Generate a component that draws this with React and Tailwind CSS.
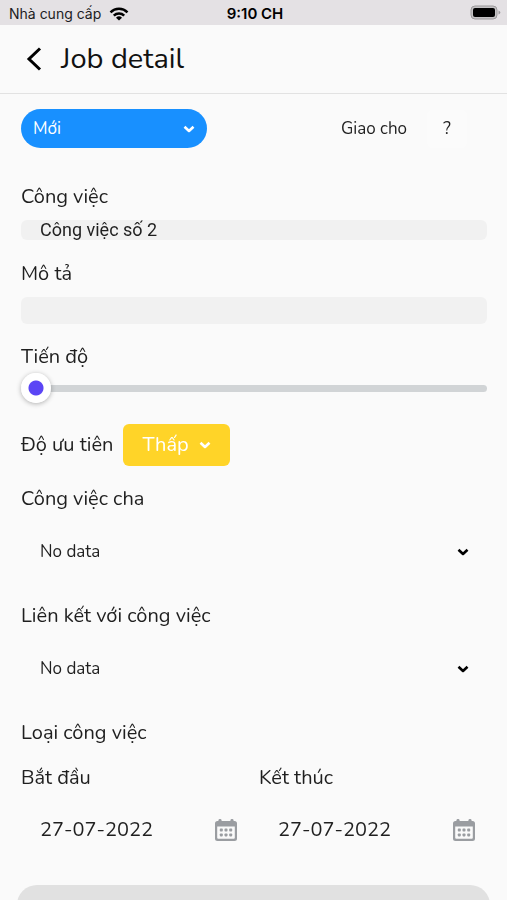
import { useState } from 'react'

function ChevronDown({ className }) {
  return (
    <svg viewBox="0 0 12 8" fill="none" stroke="currentColor" strokeWidth="2.6" strokeLinejoin="round" className={className} aria-hidden="true">
      <path d="M1.500 1.800L6 6l4.500-4.200" />
    </svg>
  )
}

function CalendarIcon() {
  return (
    <svg viewBox="0 0 22 22" className="w-[22px] h-[22px]" fill="#9a9da1" aria-hidden="true">
      <rect x="3.5" y="0" width="3" height="4" rx="1.2" />
      <rect x="15.5" y="0" width="3" height="4" rx="1.2" />
      <path fillRule="evenodd" d="M2.500 2h17A2.500 2.500 0 0 1 22 4.500v15a2.500 2.500 0 0 1-2.500 2.500h-17A2.500 2.500 0 0 1 0 19.500v-15A2.500 2.500 0 0 1 2.500 2zM2.200 7.500v11.300a1 1 0 0 0 1 1h15.600a1 1 0 0 0 1-1V7.500z" />
      {[9.6, 14.4].map(y => [4.8, 9.5, 14.2].map(x => (
        <rect key={`${x}-${y}`} x={x} y={y} width="3" height="3" rx="0.8" />
      )))}
    </svg>
  )
}

function StatusBar() {
  return (
    <div className="grid grid-cols-[1fr_auto_1fr] items-center h-[25px] shrink-0 pl-[9px] pr-[6px] bg-[#e4e1e4] font-['Inter','Liberation_Sans',sans-serif] text-sm text-[#1c1c1e]">
      <div className="flex items-center gap-2 pt-0.5">
        <span>Nhà cung cấp</span>
        <svg viewBox="0 0 20 14" className="w-5 h-[14px]" fill="none" stroke="#000" strokeWidth="2.5" aria-hidden="true">
          <path d="M1.500 5.300a12.200 12.200 0 0 1 17 0" />
          <path d="M4.800 8.600a7.500 7.500 0 0 1 10.400 0" />
          <path d="M10 13.500L7 10.700a4.300 4.300 0 0 1 6 0z" fill="#000" stroke="none" />
        </svg>
      </div>
      <span className="pt-0.5 text-[15px] leading-5 font-semibold text-black">9:10 CH</span>
      <svg viewBox="0 0 31 15" className="justify-self-end w-[31px] h-[15px]" aria-hidden="true">
        <rect x="1" y="1" width="26" height="13" rx="4" fill="#c4c2c4" stroke="#9b999b" />
        <rect x="3" y="3" width="22" height="9" rx="2" fill="#000" />
        <path d="M28.500 5.500c2.500 1 2.500 3 0 4z" fill="#9b999b" />
      </svg>
    </div>
  )
}

function SelectField({ id, label }) {
  return (
    <div>
      <label htmlFor={id} className="block">{label}</label>
      <div className="grid items-center mt-[19px]">
        <select id={id} className="col-start-1 row-start-1 appearance-none w-full h-10 pl-[19px] pr-10 bg-transparent text-[17px] outline-none">
          <option>No data</option>
        </select>
        <ChevronDown className="col-start-1 row-start-1 justify-self-end mr-[18px] w-3 h-2 text-black pointer-events-none" />
      </div>
    </div>
  )
}

function DateField({ id, label, value, onChange }) {
  return (
    <div>
      <label htmlFor={id} className="block">{label}</label>
      <div className="flex items-center h-10 mt-[18px] pl-[19px] pr-3">
        <input id={id} type="text" value={value} onChange={e => onChange(e.target.value)} className="flex-1 min-w-0 bg-transparent outline-none" />
        <button type="button" aria-label={label}>
          <CalendarIcon />
        </button>
      </div>
    </div>
  )
}

export default function App() {
  const [name, setName] = useState('Công việc số 2')
  const [description, setDescription] = useState('')
  const [progress, setProgress] = useState(0)
  const [start, setStart] = useState('27-07-2022')
  const [end, setEnd] = useState('27-07-2022')

  return (
    <div className="h-screen flex flex-col overflow-hidden bg-[#fafafa] font-['Nunito','Lato','Noto_Sans',sans-serif] text-xl leading-7 text-[#1f1f1f]">
      <StatusBar />

      <header className="flex items-center gap-[19px] h-[69px] shrink-0 pl-[26px] border-b border-[#e2e2e2]">
        <button type="button" aria-label="Back">
          <svg viewBox="0 0 16 24" className="w-4 h-6" fill="none" stroke="#000" strokeWidth="3" aria-hidden="true">
            <path d="M14 1.500L3 12l11 10.500" />
          </svg>
        </button>
        <h1 className="text-[29px] leading-9 text-[#111]">Job detail</h1>
      </header>

      <main className="flex-1 min-h-0 overflow-hidden pl-[21px] pr-5 pt-[15px]">
        <div className="flex items-center justify-between">
          <div className="grid items-center w-2/5">
            <select aria-label="Mới" className="col-start-1 row-start-1 appearance-none w-full h-[39px] pl-3 rounded-full bg-[#1890ff] text-white text-[17px] outline-none">
              <option>Mới</option>
            </select>
            <ChevronDown className="col-start-1 row-start-1 justify-self-end mr-3 w-3 h-2 text-white pointer-events-none" />
          </div>
          <div className="flex items-center gap-5 pr-5 text-[17px]">
            <span>Giao cho</span>
            <button type="button" className="w-10 h-[38px] rounded-md bg-[#fbfbfb]">?</button>
          </div>
        </div>

        <label htmlFor="name" className="block mt-[35px]">Công việc</label>
        <input id="name" type="text" value={name} onChange={e => setName(e.target.value)} className="block w-full h-5 mt-[9px] px-[19px] rounded-md bg-[#f1f1f1] font-['Roboto','Liberation_Sans',sans-serif] text-[18px] leading-5 outline-none" />

        <label htmlFor="description" className="block mt-5">Mô tả</label>
        <textarea id="description" rows={1} value={description} onChange={e => setDescription(e.target.value)} className="block w-full h-[27px] mt-[9px] px-[19px] rounded-md bg-[#f1f1f1] resize-none outline-none" />

        <label htmlFor="progress" className="block mt-[19px]">Tiến độ</label>
        <input
          id="progress"
          type="range"
          value={progress}
          onChange={e => setProgress(e.target.value)}
          className="block appearance-none w-full h-[30px] mt-[2px] bg-transparent outline-none [&::-webkit-slider-runnable-track]:h-[7px] [&::-webkit-slider-runnable-track]:rounded-full [&::-webkit-slider-runnable-track]:bg-[#d1d4d6] [&::-webkit-slider-thumb]:appearance-none [&::-webkit-slider-thumb]:w-[30px] [&::-webkit-slider-thumb]:h-[30px] [&::-webkit-slider-thumb]:-mt-3 [&::-webkit-slider-thumb]:rounded-full [&::-webkit-slider-thumb]:bg-[radial-gradient(circle,#5b45f5_7px,#ffffff_8px)] [&::-webkit-slider-thumb]:shadow-[0_1px_5px_rgba(0,0,0,0.3)]"
        />

        <div className="flex items-center gap-[10px] mt-[21px]">
          <label htmlFor="priority">Độ ưu tiên</label>
          <div className="grid items-center">
            <select id="priority" className="col-start-1 row-start-1 appearance-none w-[107px] h-[42px] pl-[19px] rounded-md bg-[#ffd428] text-white outline-none">
              <option>Thấp</option>
            </select>
            <ChevronDown className="col-start-1 row-start-1 justify-self-end mr-[19px] w-3 h-2 text-white pointer-events-none" />
          </div>
        </div>

        <div className="flex flex-col gap-[30px] mt-[19px]">
          <SelectField id="parent" label="Công việc cha" />
          <SelectField id="linked" label="Liên kết với công việc" />
          <p>Loại công việc</p>
        </div>

        <div className="grid grid-cols-2 gap-[10px] mt-[17px]">
          <DateField id="start" label="Bắt đầu" value={start} onChange={setStart} />
          <DateField id="end" label="Kết thúc" value={end} onChange={setEnd} />
        </div>
      </main>

      <footer className="h-[15px] shrink-0 mx-[17px]">
        <div className="h-12 rounded-[20px] bg-[#e1e1e1]" />
      </footer>
    </div>
  )
}
